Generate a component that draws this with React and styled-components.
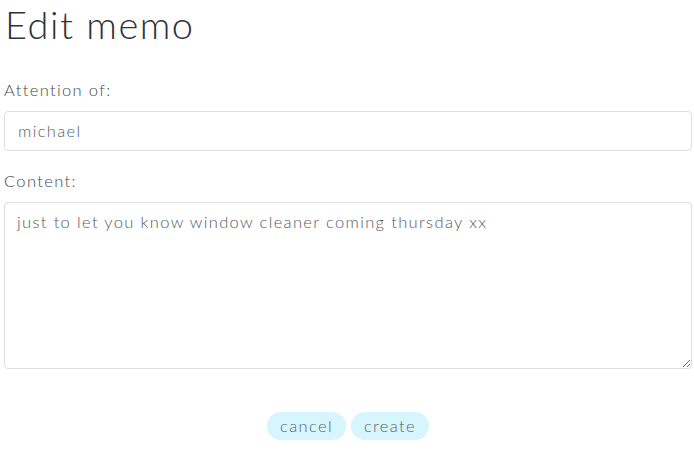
import React, { useState } from "react";
import styled, { createGlobalStyle } from "styled-components";

const Global = createGlobalStyle`
  html, body { margin: 0; padding: 0; background: #fff; }
  body { font-family: "Lato", "Open Sans", sans-serif; font-weight: 300; }
`;

const Page = styled.div`
  padding: 0 2px 0 4px;
`;

const Title = styled.h1`
  margin: 0;
  padding: 2px 0 0 1px;
  font-size: 38px;
  font-weight: 300;
  line-height: 44px;
  color: #2f3237;
  letter-spacing: 1.5px;
`;

const Form = styled.form`
  display: flex;
  flex-direction: column;
  margin-top: 32px;
`;

const Label = styled.label`
  display: block;
  font-size: 16.5px;
  color: #45484d;
  line-height: 24px;
  letter-spacing: 1.35px;
  margin-bottom: 9px;
`;

const Field = styled.div`
  display: flex;
  flex-direction: column;
  margin-bottom: ${(p) => p.gap || 0}px;
`;

const Input = styled.input`
  box-sizing: border-box;
  width: 100%;
  height: 40px;
  border: 1px solid #dcdde0;
  border-radius: 4px;
  padding: 0 13px;
  font-family: inherit;
  font-weight: 300;
  font-size: 16.5px;
  letter-spacing: 1.35px;
  color: #55595e;
  outline: none;
`;

const TextArea = styled.textarea`
  box-sizing: border-box;
  width: 100%;
  height: 167px;
  border: 1px solid #dcdde0;
  border-radius: 4px;
  padding: 7px 12px;
  font-family: inherit;
  font-weight: 300;
  font-size: 16.5px;
  line-height: 24px;
  letter-spacing: 1.35px;
  color: #55595e;
  outline: none;
  resize: vertical;
`;

const Actions = styled.div`
  display: flex;
  justify-content: center;
  gap: 5px;
  margin-top: 43px;
`;

const Button = styled.button`
  height: 28px;
  padding: 0 13px;
  border: none;
  border-radius: 14px;
  background: #d7f5fd;
  color: #56616b;
  font-family: inherit;
  font-weight: 300;
  font-size: 16.5px;
  letter-spacing: 1.35px;
  cursor: pointer;
`;

export default function App() {
  const [to, setTo] = useState("michael");
  const [content, setContent] = useState(
    "just to let you know window cleaner coming thursday xx"
  );

  return (
    <Page>
      <Global />
      <Title>Edit memo</Title>
      <Form onSubmit={(e) => e.preventDefault()}>
        <Field gap={18}>
          <Label>Attention of:</Label>
          <Input value={to} onChange={(e) => setTo(e.target.value)} />
        </Field>
        <Field>
          <Label>Content:</Label>
          <TextArea
            value={content}
            onChange={(e) => setContent(e.target.value)}
          />
        </Field>
        <Actions>
          <Button type="button">cancel</Button>
          <Button type="submit">create</Button>
        </Actions>
      </Form>
    </Page>
  );
}
